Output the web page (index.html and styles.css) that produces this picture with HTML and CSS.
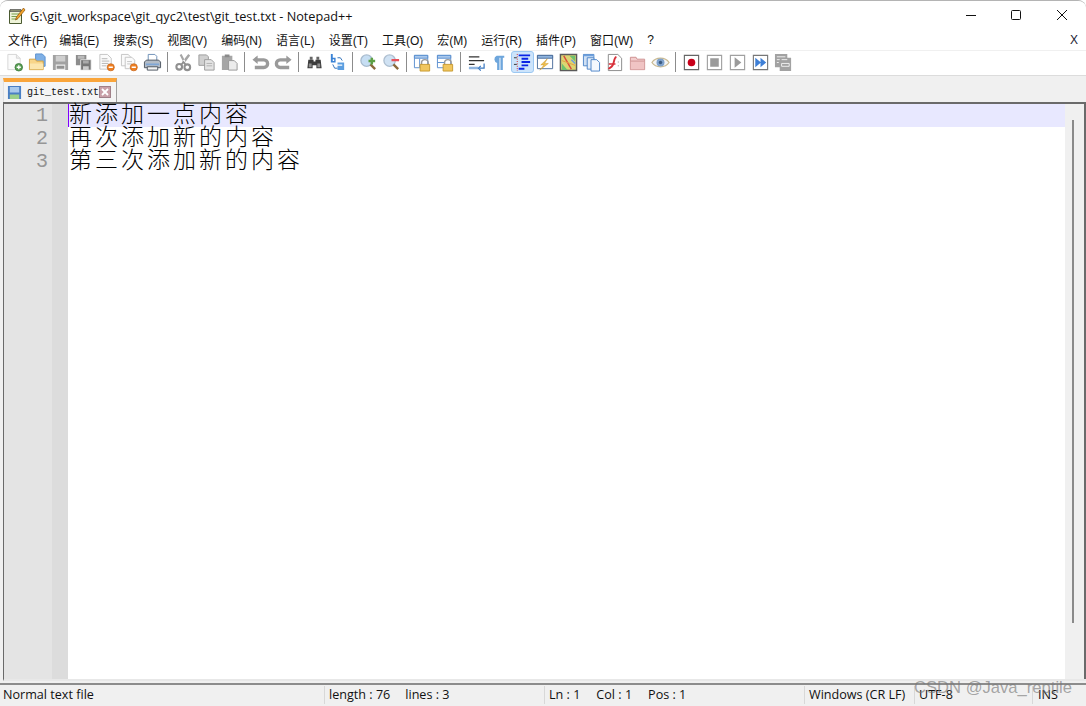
FILE: index.html
```html
<!DOCTYPE html>
<html lang="zh">
<head>
<meta charset="utf-8">
<title>git_test.txt - Notepad++</title>
<link rel="stylesheet" href="styles.css">
</head>
<body>
<svg class="sprite" xmlns="http://www.w3.org/2000/svg">
  <symbol id="i-new" viewBox="0 0 20 20"><path d="M3 1.500h9l4 4v12H3z" fill="#fbfbfb" stroke="#d6d6d6"/><path d="M12 1.500v4h4" fill="#eee" stroke="#d6d6d6"/><circle cx="14.500" cy="15" r="4" fill="#5aa055" stroke="#2f6d2f" stroke-width=".7"/><path d="M12.300 15h4.400M14.500 12.800v4.400" stroke="#fff" stroke-width="1.400"/></symbol>
  <symbol id="i-open" viewBox="0 0 20 20"><path d="M8 1h7l3 3v10H8z" fill="#7fb0e6" stroke="#5a8fd0"/><path d="M1.500 6.500h6l1.500 2h7v9h-14.500z" fill="#f8d589" stroke="#d2a040"/><path d="M2 11h14v6H2z" fill="#fce6ae"/></symbol>
  <symbol id="i-save" viewBox="0 0 20 20"><path d="M2 2h16v16H2z" fill="#a2a2a2"/><path d="M5 3h10v6H5z" fill="#cfcfcf"/><path d="M5 12h10v6H5z" fill="#eee"/><path d="M6 13.500h8v3H6z" fill="#929292"/></symbol>
  <symbol id="i-saveall" viewBox="0 0 20 20"><path d="M2 2h11v11H2z" fill="#8d8d8d"/><path d="M4 3h7v3H4z" fill="#bbb"/><path d="M7 7h11v11H7z" fill="#777" stroke="#eee" stroke-width=".8"/><path d="M9.500 8h6v3h-6z" fill="#aaa"/><path d="M9.500 14h6v4h-6z" fill="#ccc"/></symbol>
  <symbol id="i-close" viewBox="0 0 20 20"><path d="M3 1.500h8l4 4V17H3z" fill="#fbfbfb" stroke="#c4c4c4"/><path d="M5 6h6M5 8.500h8M5 11h7M5 13.500h5" stroke="#b5b5b5"/><circle cx="14.500" cy="15" r="3.800" fill="#ee7f22" stroke="#bb5a10" stroke-width=".6"/><path d="M12.300 15h4.400" stroke="#fff" stroke-width="1.500"/></symbol>
  <symbol id="i-closeall" viewBox="0 0 20 20"><path d="M1.500 1.500h7l3 3v9h-10z" fill="#fafafa" stroke="#c4c4c4"/><path d="M5.500 4.500h7l3 3v9h-10z" fill="#fafafa" stroke="#c4c4c4"/><path d="M7.500 9h5M7.500 11.500h5" stroke="#c4c4c4"/><circle cx="14.500" cy="15" r="3.800" fill="#ee7f22" stroke="#bb5a10" stroke-width=".6"/><path d="M12.300 15h4.400" stroke="#fff" stroke-width="1.500"/></symbol>
  <symbol id="i-print" viewBox="0 0 20 20"><path d="M5.500 1.500h7l2 2v6h-9z" fill="#fff" stroke="#6d8fb6"/><path d="M1.500 9.500l2-2h13l2 2v6h-17z" fill="#b4bcc6" stroke="#4d5560"/><path d="M3 11h14v2H3z" fill="#7fa6d6"/><path d="M4.500 14.500h11v3.500h-11z" fill="#f4f4f4" stroke="#4d5560"/></symbol>
  <symbol id="i-cut" viewBox="0 0 20 20"><path d="M15 1l2 1.500-6.500 9-2-2zM8 1L6 2l4 8 2-1z" fill="#a6a6a6"/><circle cx="5.500" cy="14.500" r="3" fill="none" stroke="#909090" stroke-width="2.200"/><circle cx="14" cy="15" r="3" fill="none" stroke="#909090" stroke-width="2.200"/><path d="M7.500 12.500l2.500-3 2.500 3" fill="none" stroke="#909090" stroke-width="1.800"/></symbol>
  <symbol id="i-copy" viewBox="0 0 20 20"><path d="M2 2h8l2 2v9H2z" fill="#d0d0d0" stroke="#9c9c9c"/><path d="M8 7h7l3 3v8H8z" fill="#e4e4e4" stroke="#9c9c9c"/><path d="M10 11h6M10 13.500h6" stroke="#b0b0b0"/></symbol>
  <symbol id="i-paste" viewBox="0 0 20 20"><path d="M2 3h11v15H2z" fill="#a6a6a6"/><path d="M5 1.500h5v3H5z" fill="#8a8a8a"/><path d="M9 8h6l3 3v7H9z" fill="#ececec" stroke="#989898"/></symbol>
  <symbol id="i-undo" viewBox="0 0 20 20"><path d="M7 2.500L1.500 7 7 11.500V9h6.500a2 2 0 0 1 0 4.500H4v3.500h9.500a5.500 5.500 0 0 0 0-11.500H7z" fill="#9a9a9a"/></symbol>
  <symbol id="i-redo" viewBox="0 0 20 20"><path d="M13 2.500L18.500 7 13 11.500V9H6.500a2 2 0 0 0 0 4.500H16v3.500H6.500a5.500 5.500 0 0 1 0-11.500H13z" fill="#9a9a9a"/></symbol>
  <symbol id="i-find" viewBox="0 0 20 20"><path d="M5 4h3v3H5zM12 4h3v3h-3z" fill="#666"/><path d="M3.500 7H9v2h2V7h5.500l1 9H12v-3H8v3H2.500z" fill="#3c3c3c"/><path d="M4 11h3v4H4zM13 11h3v4h-3z" fill="#8f8f8f"/></symbol>
  <symbol id="i-replace" viewBox="0 0 20 20"><path d="M3 1v9h5V5H5V1zM5 6.500h1.500v2H5z" fill="#3a83d6" fill-rule="evenodd"/><path d="M10 10h7v8h-7v-4.500h5V12h-5z" fill="#5c9ee0"/><path d="M5 12l2 4h3M15 8l-2-3h-3" fill="none" stroke="#2d6fb8"/></symbol>
  <symbol id="i-zoomin" viewBox="0 0 20 20"><circle cx="8" cy="8" r="6" fill="#c6def3" stroke="#a8bccf" stroke-width="1.400"/><path d="M12 12l5 5" stroke="#8b6a3c" stroke-width="2.500"/><path d="M10 8.500h7M13.500 5v7" stroke="#5da044" stroke-width="2.600"/></symbol>
  <symbol id="i-zoomout" viewBox="0 0 20 20"><circle cx="8" cy="8" r="6" fill="#d0e2f3" stroke="#aebfd0" stroke-width="1.400"/><path d="M12 12l5 5" stroke="#8b6a3c" stroke-width="2.500"/><path d="M10 7.500h8" stroke="#e8505a" stroke-width="2.600"/></symbol>
  <symbol id="i-sync1" viewBox="0 0 20 20"><path d="M1.500 2.500h14v13h-14z" fill="#fff" stroke="#5b8fd0"/><path d="M1.500 2.500h14v3h-14z" fill="#a9c8ec" stroke="#5b8fd0"/><path d="M7 6v9" stroke="#5b8fd0"/><path d="M9 12.500v-2a3.500 3.500 0 0 1 7 0v2" fill="none" stroke="#999" stroke-width="1.500"/><path d="M7.500 12h10v7h-10z" fill="#f1c65e" stroke="#c79a30"/></symbol>
  <symbol id="i-sync2" viewBox="0 0 20 20"><path d="M1.500 2.500h14v13h-14z" fill="#fff" stroke="#5b8fd0"/><path d="M1.500 2.500h14v3h-14z" fill="#a9c8ec" stroke="#5b8fd0"/><path d="M1.500 10h7" stroke="#5b8fd0"/><path d="M9 12.500v-2a3.500 3.500 0 0 1 7 0v2" fill="none" stroke="#999" stroke-width="1.500"/><path d="M7.500 12h10v7h-10z" fill="#f1c65e" stroke="#c79a30"/></symbol>
  <symbol id="i-wrap" viewBox="0 0 20 20"><path d="M2 4h11M2 8h16M2 12h6" stroke="#333" stroke-width="1.300"/><path d="M2 14.500h10v2.500H2z" fill="#8fb4de"/><path d="M18 11v5h-5" fill="none" stroke="#3a78c0" stroke-width="1.300"/><path d="M14.500 13.500L12 16l2.500 2.500" fill="none" stroke="#3a78c0" stroke-width="1.300"/></symbol>
  <symbol id="i-pil" viewBox="0 0 20 20"><path d="M7 3h8v2h-1.500v13H11V5h-1v13H7.500v-7.500A4 4 0 0 1 7 3z" fill="#6ea6dc"/></symbol>
  <symbol id="i-indent" viewBox="0 0 20 20"><path d="M6 1.500h12v2H6zM9 5h7v2H9zM9 8.500h9v2H9zM9 12h7v2H9zM6 15.500h6v2H6z" fill="#0a24e6"/><path d="M4.500 1v18" stroke="#d22" stroke-dasharray="1 1.500"/><path d="M1 5h3M1 12h3" stroke="#333"/></symbol>
  <symbol id="i-doc" viewBox="0 0 20 20"><path d="M1.500 2.500h16v14h-16z" fill="#fff" stroke="#4c6f9c"/><path d="M1.500 2.500h16v3h-16z" fill="#8fb4de" stroke="#4c6f9c"/><path d="M12 6l-7 6.500h3.500L4 18l9-7H9z" fill="#f3c24e" stroke="#c6952a" stroke-width=".5"/></symbol>
  <symbol id="i-map" viewBox="0 0 20 20"><path d="M1.500 1.500h17v17h-17z" fill="#dcd572" stroke="#5a5a5a" stroke-width="1.500"/><path d="M3 11l6 7H3zM11 3h6v6z" fill="#6ec26e"/><path d="M5 3l8 14" stroke="#d94a3c" stroke-width="1.500"/><path d="M3 8l14 5" stroke="#e8a040"/><path d="M13 7l4 4" stroke="#6ba0e0" stroke-width="1.500"/></symbol>
  <symbol id="i-docs" viewBox="0 0 20 20"><path d="M1.500 1.500h11v12h-11z" fill="#cfe0f4" stroke="#4f86c8"/><path d="M1.500 1.500h11v2h-11z" fill="#6ea0dc"/><path d="M5.500 5h7v12h-7z" fill="#e6eff9" stroke="#4f86c8"/><path d="M9.500 7h6l3 3v9h-9z" fill="#f4f8fd" stroke="#4f86c8"/></symbol>
  <symbol id="i-func" viewBox="0 0 20 20"><path d="M3.500 1.500h10l4 4v13h-14z" fill="#fff" stroke="#8a8a8a"/><path d="M12 4c-3 1-2 6-4 9s-3 2-4 4" fill="none" stroke="#d8303a" stroke-width="2"/><path d="M4 11.500h7" stroke="#d8303a" stroke-width="1.500"/><path d="M14 9v1M14 13v1" stroke="#888"/></symbol>
  <symbol id="i-folder" viewBox="0 0 20 20"><path d="M2.500 4.500h6l1 2h8v11h-15z" fill="#f3cdcd" stroke="#cc8f8f"/><path d="M3 9h14v8H3z" fill="#f0c4c4"/><path d="M3 8.500h14" stroke="#cc8f8f"/></symbol>
  <symbol id="i-eye" viewBox="0 0 20 20"><path d="M1 10c4-6 14-6 18 0-4 6-14 6-18 0z" fill="#f4f4f4" stroke="#c9b990" stroke-width="1.300"/><circle cx="10" cy="10" r="4.200" fill="#7fa2cc"/><circle cx="10" cy="10" r="1.800" fill="#3b5a80"/></symbol>
  <symbol id="i-rec" viewBox="0 0 20 20"><path d="M2.500 2.500h15v15h-15z" fill="#fff" stroke="#666" stroke-width="1.200"/><circle cx="10" cy="10" r="4" fill="#c8001a"/></symbol>
  <symbol id="i-stop" viewBox="0 0 20 20"><path d="M2.500 2.500h15v15h-15z" fill="#fff" stroke="#a0a0a0" stroke-width="1.200"/><path d="M5.500 5.500h9v9h-9z" fill="#9a9a9a"/></symbol>
  <symbol id="i-play" viewBox="0 0 20 20"><path d="M2.500 2.500h15v15h-15z" fill="#fff" stroke="#a0a0a0" stroke-width="1.200"/><path d="M7 4.500l7 5.500-7 5.500z" fill="#9a9a9a"/></symbol>
  <symbol id="i-ff" viewBox="0 0 20 20"><path d="M2.500 2.500h15v15h-15z" fill="#fff" stroke="#777" stroke-width="1.200"/><path d="M4.500 5l6 5-6 5zM10 5l6 5-6 5z" fill="#3e7fd6"/></symbol>
  <symbol id="i-macro" viewBox="0 0 20 20"><path d="M1 1h13v4h4v14H6v-4H1z" fill="#a2a2a2"/><path d="M3 4h9M3 7h3M8 7h6M3 10h2M8 11h8v3H8z" stroke="#f0f0f0" fill="none"/></symbol>
  <symbol id="i-tabsave" viewBox="0 0 16 16"><path d="M1 1h14v14H1z" fill="#4a7fc4"/><path d="M3 2h10v6H3z" fill="#a9c9ec"/><path d="M3 10h10v5H3z" fill="#9bd08a"/></symbol>
  <symbol id="i-np" viewBox="0 0 18 18"><path d="M1.500 3.500h12v13h-12z" fill="#eef3d8" stroke="#4a5a30"/><path d="M2 2.500h11v2H2z" fill="#8a8f70" stroke="#3f3f3f" stroke-width=".6"/><path d="M3.500 7h8M3.500 9.500h7M3.500 12h6" stroke="#79a04a"/><path d="M15.500 1L8.500 10l-1 3 2.500-1.500L17 3z" fill="#f4a62a" stroke="#8a4f0a" stroke-width=".7"/></symbol>
</svg>

<div class="window">
  <header class="titlebar">
    <svg class="app-icon"><use href="#i-np"/></svg>
    <span class="title">G:\git_workspace\git_qyc2\test\git_test.txt - Notepad++</span>
    <div class="controls">
      <svg class="ctl" viewBox="0 0 46 30"><path d="M19 14.500h10" stroke="#111" fill="none"/></svg>
      <svg class="ctl" viewBox="0 0 46 30"><rect x="18.500" y="9.500" width="9" height="9" rx="1" stroke="#111" fill="none"/></svg>
      <svg class="ctl" viewBox="0 0 46 30"><path d="M18 9l10 10M28 9L18 19" stroke="#111" fill="none"/></svg>
    </div>
  </header>

  <nav class="menubar">
    <span class="menu m1">文件(F)</span>
    <span class="menu">编辑(E)</span>
    <span class="menu">搜索(S)</span>
    <span class="menu">视图(V)</span>
    <span class="menu">编码(N)</span>
    <span class="menu">语言(L)</span>
    <span class="menu">设置(T)</span>
    <span class="menu">工具(O)</span>
    <span class="menu">宏(M)</span>
    <span class="menu">运行(R)</span>
    <span class="menu">插件(P)</span>
    <span class="menu">窗口(W)</span>
    <span class="menu">?</span>
    <span class="menu-x">X</span>
  </nav>

  <div class="toolbar">
    <span class="tb"><svg class="ico"><use href="#i-new"/></svg></span>
    <span class="tb"><svg class="ico"><use href="#i-open"/></svg></span>
    <span class="tb"><svg class="ico"><use href="#i-save"/></svg></span>
    <span class="tb"><svg class="ico"><use href="#i-saveall"/></svg></span>
    <span class="tb"><svg class="ico"><use href="#i-close"/></svg></span>
    <span class="tb"><svg class="ico"><use href="#i-closeall"/></svg></span>
    <span class="tb"><svg class="ico"><use href="#i-print"/></svg></span>
    <span class="sep"></span>
    <span class="tb"><svg class="ico"><use href="#i-cut"/></svg></span>
    <span class="tb"><svg class="ico"><use href="#i-copy"/></svg></span>
    <span class="tb"><svg class="ico"><use href="#i-paste"/></svg></span>
    <span class="sep"></span>
    <span class="tb"><svg class="ico"><use href="#i-undo"/></svg></span>
    <span class="tb"><svg class="ico"><use href="#i-redo"/></svg></span>
    <span class="sep"></span>
    <span class="tb"><svg class="ico"><use href="#i-find"/></svg></span>
    <span class="tb"><svg class="ico"><use href="#i-replace"/></svg></span>
    <span class="sep"></span>
    <span class="tb"><svg class="ico"><use href="#i-zoomin"/></svg></span>
    <span class="tb"><svg class="ico"><use href="#i-zoomout"/></svg></span>
    <span class="sep"></span>
    <span class="tb"><svg class="ico"><use href="#i-sync1"/></svg></span>
    <span class="tb"><svg class="ico"><use href="#i-sync2"/></svg></span>
    <span class="sep"></span>
    <span class="tb"><svg class="ico"><use href="#i-wrap"/></svg></span>
    <span class="tb"><svg class="ico"><use href="#i-pil"/></svg></span>
    <span class="tb active"><svg class="ico"><use href="#i-indent"/></svg></span>
    <span class="tb"><svg class="ico"><use href="#i-doc"/></svg></span>
    <span class="tb"><svg class="ico"><use href="#i-map"/></svg></span>
    <span class="tb"><svg class="ico"><use href="#i-docs"/></svg></span>
    <span class="tb"><svg class="ico"><use href="#i-func"/></svg></span>
    <span class="tb"><svg class="ico"><use href="#i-folder"/></svg></span>
    <span class="tb"><svg class="ico"><use href="#i-eye"/></svg></span>
    <span class="sep"></span>
    <span class="tb"><svg class="ico"><use href="#i-rec"/></svg></span>
    <span class="tb"><svg class="ico"><use href="#i-stop"/></svg></span>
    <span class="tb"><svg class="ico"><use href="#i-play"/></svg></span>
    <span class="tb"><svg class="ico"><use href="#i-ff"/></svg></span>
    <span class="tb"><svg class="ico"><use href="#i-macro"/></svg></span>
  </div>

  <div class="tabbar">
    <div class="tab">
      <svg class="tab-save"><use href="#i-tabsave"/></svg>
      <span class="tab-name">git_test.txt</span>
      <svg class="tab-close" viewBox="0 0 12 12"><rect x=".5" y=".5" width="11" height="11" fill="#c9a0a8" stroke="#a08088"/><path d="M3 3l6 6M9 3l-6 6" stroke="#fff" stroke-width="1.800"/></svg>
    </div>
  </div>

  <main class="editor">
    <div class="gutter">
      <div class="numbers">
        <div class="num">1</div>
        <div class="num">2</div>
        <div class="num">3</div>
      </div>
      <div class="fold"></div>
    </div>
    <div class="code">
      <div class="line current">新添加一点内容</div>
      <div class="line">再次添加新的内容</div>
      <div class="line">第三次添加新的内容</div>
    </div>
    <div class="scrollbar"><div class="thumb"></div></div>
  </main>

  <footer class="status">
    <div class="cell c1">Normal text file</div>
    <div class="cell c2"><span>length : 76</span><span>lines : 3</span></div>
    <div class="cell c3"><span>Ln : 1</span><span>Col : 1</span><span>Pos : 1</span></div>
    <div class="cell c4">Windows (CR LF)</div>
    <div class="cell c5">UTF-8</div>
    <div class="cell c6">INS</div>
  </footer>
  <div class="watermark">CSDN @Java_reptile</div>
</div>
</body>
</html>
```
FILE: styles.css
```css
* { box-sizing: border-box; }
html, body { margin: 0; padding: 0; background: #fff; }
.sprite { position: absolute; width: 0; height: 0; }
.window {
  position: relative;
  width: 1086px;
  height: 706px;
  display: flex;
  flex-direction: column;
  overflow: hidden;
  background: #f0f0f0;
  border-top: 1px solid #b4b4b4;
  border-radius: 8px 8px 0 0;
  font-family: "Noto Sans", "Noto Sans CJK SC", sans-serif;
  color: #111;
}
.window::before {
  content: "";
  position: absolute;
  top: -1px;
  right: 0;
  width: 246px;
  height: 1px;
  background: #cf6a5c;
}
.titlebar {
  height: 30px;
  flex: none;
  display: flex;
  align-items: center;
  background: #fff;
  padding: 0 1px 1px 8px;
}
.app-icon { width: 18px; height: 18px; flex: none; }
.title { margin-left: 4px; font-size: 12.7px; font-family: "Open Sans", sans-serif; }
.controls { margin-left: auto; display: flex; }
.ctl { width: 46px; height: 30px; display: block; }
.menubar {
  height: 19px;
  flex: none;
  display: flex;
  align-items: center;
  gap: 14px;
  background: #fff;
  padding: 0 0 2px 8px;
  font-size: 12px;
  font-family: "Liberation Sans", "Noto Sans CJK SC", sans-serif;
}
.menu { white-space: nowrap; }
.m1 { margin-right: -2px; }
.menu-x { margin-left: auto; margin-right: 8px; font-size: 12px; color: #223; }
.toolbar {
  height: 26px;
  flex: none;
  display: flex;
  align-items: center;
  padding: 0 0 2px 2.5px;
  background: #fff;
  border-top: 1px solid #f0f0f0;
  border-bottom: 1px solid #dcdcdc;
}
.tb {
  width: 23px;
  height: 22px;
  display: flex;
  align-items: center;
  justify-content: center;
  flex: none;
  border: 1px solid transparent;
}
.tb.active { background: #cce4fb; border-color: #9cc8f2; border-radius: 3px; }
.ico { width: 19px; height: 19px; display: block; }
.sep { width: 8px; height: 20px; flex: none; display: flex; justify-content: center; }
.sep::before { content: ""; width: 1px; background: #8c8c8c; }
.tabbar {
  height: 26px;
  flex: none;
  padding: 2px 0 0 3px;
  display: flex;
  background: #f0f0f0;
}
.tab {
  width: 114px;
  height: 24px;
  display: flex;
  align-items: center;
  padding-left: 3px;
  background: #f4f4f4;
  border-top: 4px solid #faa53a;
  border-right: 1px solid #a0a0a0;
  border-left: 1px solid #e0e0e0;
}
.tab-save { width: 15px; height: 15px; flex: none; }
.tab-name { margin-left: 5px; font-family: "Liberation Mono", monospace; font-size: 10px; }
.tab-close { width: 12px; height: 12px; flex: none; }
.editor {
  flex: 1;
  min-height: 0;
  display: flex;
  margin-left: 3px;
  margin-bottom: 2px;
  border-top: 2px solid #6a6a6a;
  border-left: 1px solid #6a6a6a;
  border-bottom: 2px solid #e8e8e8;
  background: #fff;
}
.gutter { width: 64px; flex: none; display: flex; }
.numbers { width: 48px; background: #e4e4e4; padding-right: 4px; }
.num {
  height: 23px;
  line-height: 23px;
  text-align: right;
  font-family: "Liberation Mono", monospace;
  font-size: 20px;
  color: #969696;
}
.fold { flex: 1; background: #dcdcdc; }
.code { flex: 1; min-width: 0; }
.line {
  height: 23px;
  line-height: 17px;
  padding-left: 1px;
  font-family: "Noto Sans CJK SC", sans-serif;
  font-size: 23px;
  font-weight: 300;
  letter-spacing: 3px;
  white-space: nowrap;
  color: #000;
}
.line.current { background: #e8e8ff; box-shadow: inset 1px 0 0 #8000ff; }
.scrollbar {
  width: 21px;
  flex: none;
  background: #f0f0f0;
  border-right: 2px solid #6a6a6a;
  padding: 16px 0 0 7px;
}
.thumb { width: 2px; height: 503px; background: #8a8a8a; }
.status {
  height: 23px;
  flex: none;
  display: flex;
  align-items: center;
  padding-bottom: 1px;
  border-top: 2px solid #8c8c8c;
  background: #f0f0f0;
  font-size: 12.6px;
  font-family: "Open Sans", sans-serif;
  white-space: nowrap;
}
.cell { height: 18px; line-height: 18px; padding-left: 3px; border-right: 1px solid #d8d8d8; flex: none; display: flex; }
.c1 { width: 325px; }
.c2 { width: 220px; padding-left: 4px; gap: 15px; }
.c3 { width: 260px; padding-left: 4px; gap: 16px; }
.c4 { width: 110px; padding-left: 4px; }
.c5 { width: 118px; padding-left: 4px; }
.c6 { flex: 1; padding-left: 5px; border-right: 0; }
.watermark {
  position: absolute;
  right: 14px;
  bottom: 8px;
  font-family: "Liberation Sans", sans-serif;
  font-size: 16.6px;
  color: rgba(120, 120, 120, .65);
  white-space: nowrap;
}
```
